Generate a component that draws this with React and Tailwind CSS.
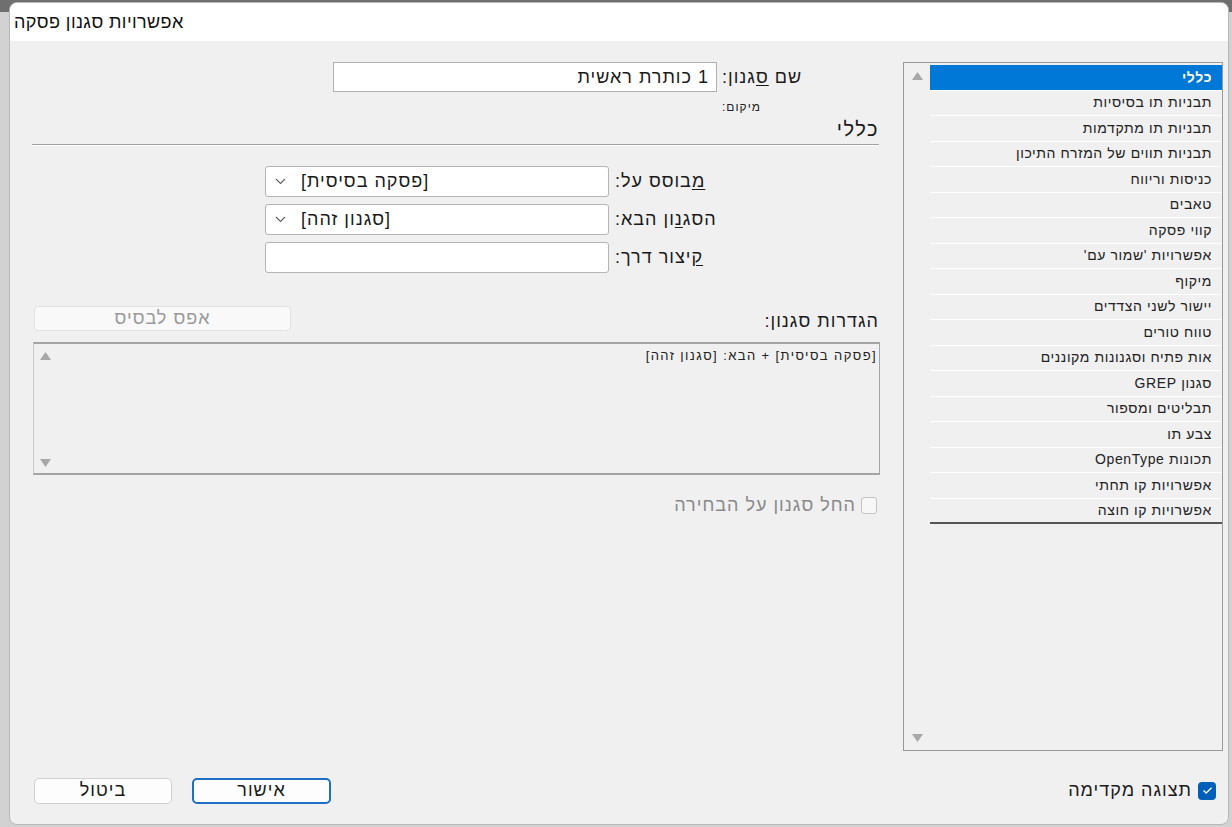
import React from 'react';

const ITEMS = [
  'כללי',
  'תבניות תו בסיסיות',
  'תבניות תו מתקדמות',
  'תבניות תווים של המזרח התיכון',
  'כניסות וריווח',
  'טאבים',
  'קווי פסקה',
  "אפשרויות 'שמור עם'",
  'מיקוף',
  'יישור לשני הצדדים',
  'טווח טורים',
  'אות פתיח וסגנונות מקוננים',
  'סגנון GREP',
  'תבליטים ומספור',
  'צבע תו',
  'תכונות OpenType',
  'אפשרויות קו תחתי',
  'אפשרויות קו חוצה',
];

const font = { fontFamily: '"Liberation Sans", "DejaVu Sans", Arial, sans-serif' };

function Chevron() {
  return (
    <svg width="11" height="7" viewBox="0 0 11 7" className="shrink-0">
      <polyline points="1,1 5.5,5.5 10,1" fill="none" stroke="#606060" strokeWidth="1.1" />
    </svg>
  );
}

function Tri({ down }) {
  return (
    <svg width="11" height="8" viewBox="0 0 11 8">
      <polygon points={down ? '0,0 11,0 5.5,8' : '0,8 11,8 5.5,0'} fill="#a8a8a8" />
    </svg>
  );
}

function Dropdown({ value }) {
  return (
    <div className="w-[344px] h-[31px] bg-white border border-[#b5b5b5] rounded-[3px] flex items-center pl-[9px]">
      <Chevron />
      <span dir="rtl" className="ml-[15px] text-[18px] tracking-[1px] text-[#1a1a1a]">{value}</span>
    </div>
  );
}

function FieldRow({ label, children }) {
  return (
    <div className="flex items-center ml-[233px]">
      {children}
      <span dir="rtl" className="ml-[6px] text-[18px] tracking-[1px] text-[#1a1a1a]">{label}</span>
    </div>
  );
}

export default function App() {
  return (
    <div style={font} className="w-[1232px] h-[827px] bg-[#d2d2d2] relative overflow-hidden">
      <div className="h-[12px] bg-[#6f6f6f]" />
      <div className="absolute left-[9px] top-[2px] w-[1220px] h-[823px] rounded-[8px] bg-[#f0f0f0] border border-[#b8b8b8] overflow-hidden flex flex-col">
        {/* title bar */}
        <div className="h-[38px] bg-white flex items-center pl-[4px] shrink-0">
          <span dir="rtl" className="text-[18px] tracking-[0.4px] text-[#111]">אפשרויות סגנון פסקה</span>
        </div>

        <div className="flex pt-[21px] h-[710px]">
          {/* left column */}
          <div className="ml-[22px] w-[847px] flex flex-col">
            <div className="flex items-center ml-[301px] h-[30px]">
              <div dir="rtl" className="w-[384px] h-[30px] bg-white border border-[#b0b0b0] flex items-center pr-[7px] text-[18px] tracking-[1px] text-[#1a1a1a]">
                1 כותרת ראשית
              </div>
              <span dir="rtl" className="ml-[5px] text-[18px] tracking-[1px] text-[#1a1a1a]">
                שם <u className="underline-offset-2">ס</u>גנון:
              </span>
            </div>
            <div className="ml-[690px] mt-[8px] h-[14px] flex items-center">
              <span dir="rtl" className="text-[12px] tracking-[1px] text-[#222]">מיקום:</span>
            </div>
            <div className="flex justify-end mt-[4px] h-[22px] items-center">
              <span dir="rtl" className="text-[20px] tracking-[1.5px] text-[#1a1a1a]">כללי</span>
            </div>
            <div className="h-[2px] border-t border-[#a0a0a0] border-b border-b-white mt-[4px]" />

            <div className="mt-[20px] flex flex-col gap-[7px]">
              <FieldRow label={<><u className="underline-offset-2">מ</u>בוסס על:</>}>
                <Dropdown value="[פסקה בסיסית]" />
              </FieldRow>
              <FieldRow label={<>הסג<u className="underline-offset-2">נ</u>ון הבא:</>}>
                <Dropdown value="[סגנון זהה]" />
              </FieldRow>
              <FieldRow label={<><u className="underline-offset-2">ק</u>יצור דרך:</>}>
                <div className="w-[344px] h-[31px] bg-white border border-[#b5b5b5] rounded-[3px]" />
              </FieldRow>
            </div>

            <div className="mt-[33px] flex items-end justify-between">
              <div className="ml-[2px] w-[257px] h-[25px] rounded-[4px] bg-[#f9f9f9] border border-[#e2e2e2] flex items-center justify-center">
                <span dir="rtl" className="text-[18px] tracking-[1px] text-[#9a9a9a]">אפס לבסיס</span>
              </div>
              <span dir="rtl" className="text-[18px] tracking-[1px] text-[#1a1a1a] mb-[-4px]">הגדרות סגנון:</span>
            </div>

            <div className="mt-[11px] ml-[1px] w-[847px] h-[133px] border-t-2 border-l border-r border-b-2 border-t-[#a4a4a4] border-l-[#c8c8c8] border-r-[#a4a4a4] border-b-[#a4a4a4] bg-[#f0f0f0] flex">
              <div className="w-[22px] flex flex-col items-center justify-between pt-[8px] pb-[6px]">
                <Tri />
                <Tri down />
              </div>
              <div className="flex-1 flex justify-end pr-[2px] pt-[2px]">
                <span dir="rtl" className="text-[13px] tracking-[1.4px] text-[#222]">[פסקה בסיסית] + הבא: [סגנון זהה]</span>
              </div>
            </div>

            <div className="mt-[17px] flex justify-end items-center pr-[2px]">
              <span dir="rtl" className="text-[18px] tracking-[1px] text-[#8a8a8a] mr-[5px]">החל סגנון על הבחירה</span>
              <div className="w-[16px] h-[17px] rounded-[3px] border border-[#c4c4c4] bg-[#f7f7f7]" />
            </div>
          </div>

          {/* right list */}
          <div className="ml-[24px] w-[320px] h-[689px] border border-[#9a9a9a] bg-[#f0f0f0] flex">
            <div className="w-[26px] flex flex-col items-center justify-between pt-[9px] pb-[8px]">
              <Tri />
              <Tri down />
            </div>
            <div className="flex-1 pt-[2px]">
              {ITEMS.map((item, i) => (
                <div
                  key={i}
                  dir="rtl"
                  className={
                    i === 0
                      ? 'h-[25.5px] bg-[#0078d7] text-white font-bold text-[14px] tracking-[0.6px] flex items-center pr-[10px] border-b border-white'
                      : i === ITEMS.length - 1
                      ? 'h-[25.5px] text-[#222] text-[14px] tracking-[0.6px] flex items-center pr-[10px] border-b-2 border-[#555]'
                      : 'h-[25.5px] text-[#222] text-[14px] tracking-[0.6px] flex items-center pr-[10px] border-b border-white'
                  }
                >
                  {item}
                </div>
              ))}
            </div>
          </div>
        </div>

        {/* bottom row */}
        <div className="mt-[26px] flex items-center justify-between pl-[24px] pr-[12px]">
          <div className="flex gap-[20px]">
            <div className="w-[138px] h-[26px] rounded-[5px] bg-[#fdfdfd] border border-[#d0d0d0] flex items-center justify-center">
              <span dir="rtl" className="text-[18px] tracking-[1px] text-[#1a1a1a]">ביטול</span>
            </div>
            <div className="w-[139px] h-[26px] rounded-[5px] bg-[#fdfdfd] border-2 border-[#1f6fc5] flex items-center justify-center">
              <span dir="rtl" className="text-[18px] tracking-[1px] text-[#1a1a1a]">אישור</span>
            </div>
          </div>
          <div className="flex items-center">
            <span dir="rtl" className="text-[18px] tracking-[1px] text-[#1a1a1a] mr-[6px]">תצוגה מקדימה</span>
            <div className="w-[18px] h-[18px] rounded-[4px] bg-[#005fb8] flex items-center justify-center">
              <svg width="11" height="9" viewBox="0 0 11 9">
                <polyline points="1.5,4.5 4.2,7 9.5,1.8" fill="none" stroke="white" strokeWidth="1.3" />
              </svg>
            </div>
          </div>
        </div>
      </div>
    </div>
  );
}
